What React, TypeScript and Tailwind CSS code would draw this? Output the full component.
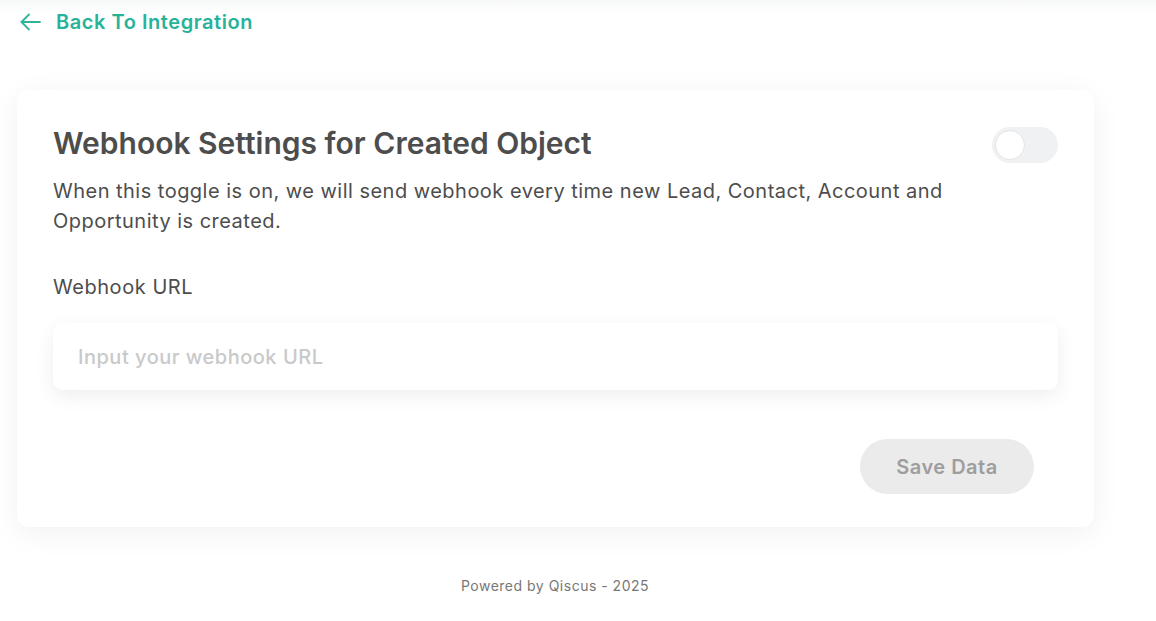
import React from "react";

export default function App() {
  return (
    <div className="min-h-[621px] w-[1156px] bg-white relative" style={{ fontFamily: "Inter, 'Noto Sans', sans-serif" }}>
      <div className="absolute left-0 right-0 top-0 h-[14px] bg-gradient-to-b from-[#f6f8f7] to-white pointer-events-none" />
      <div className="relative flex items-center gap-[15px] pl-[20px] pt-[5px] h-[38px]">
        <svg width="21" height="18" viewBox="0 0 21 18" fill="none" stroke="#2fb49c" strokeWidth="1.8" strokeLinecap="round" strokeLinejoin="round">
          <path d="M20 9H1.5" />
          <path d="M9 1.5L1.5 9L9 16.5" />
        </svg>
        <span className="text-[20px] font-semibold text-[#27b29a] leading-[24px] tracking-[0.55px]">Back To Integration</span>
      </div>
      <div className="ml-[17px] mt-[52px] w-[1077px] rounded-[12px] bg-white shadow-[0_6px_30px_rgba(0,0,0,0.06)] px-[36px] pt-[35px] pb-[33px]">
        <div className="flex items-start justify-between">
          <h1 className="text-[30px] font-semibold text-[#4d4d4d] leading-[36px] tracking-[0px]">Webhook Settings for Created Object</h1>
          <div className="mt-[2px] w-[66px] h-[36px] rounded-full bg-[#f0f1f3] flex items-center px-[3px]">
            <div className="w-[30px] h-[30px] rounded-full bg-white border border-[#e3e4e6]" />
          </div>
        </div>
        <p className="mt-[13px] text-[20px] leading-[30px] text-[#4d4d4d] max-w-[960px] tracking-[0.48px]">
          When this toggle is on, we will send webhook every time new Lead, Contact, Account and Opportunity is created.
        </p>
        <div className="mt-[37px] text-[20px] leading-[28px] text-[#4d4d4d] tracking-[0.55px]">Webhook URL</div>
        <input
          className="mt-[22px] w-full h-[67px] rounded-[10px] bg-white shadow-[0_6px_20px_rgba(0,0,0,0.07)] px-[25px] text-[20px] font-medium tracking-[0.5px] text-[#4d4d4d] placeholder:text-[#c9c9c9] outline-none"
          placeholder="Input your webhook URL"
        />
        <div className="mt-[49px] flex justify-end pr-[24px]">
          <button className="w-[174px] h-[55px] rounded-full bg-[#ebebeb] text-[20px] font-semibold text-[#9e9e9e] tracking-[0.5px]">Save Data</button>
        </div>
      </div>
      <div className="mt-[49px] text-center text-[14px] leading-[20px] text-[#777777] w-[1110px] tracking-[0.5px]">Powered by Qiscus - 2025</div>
    </div>
  );
}
